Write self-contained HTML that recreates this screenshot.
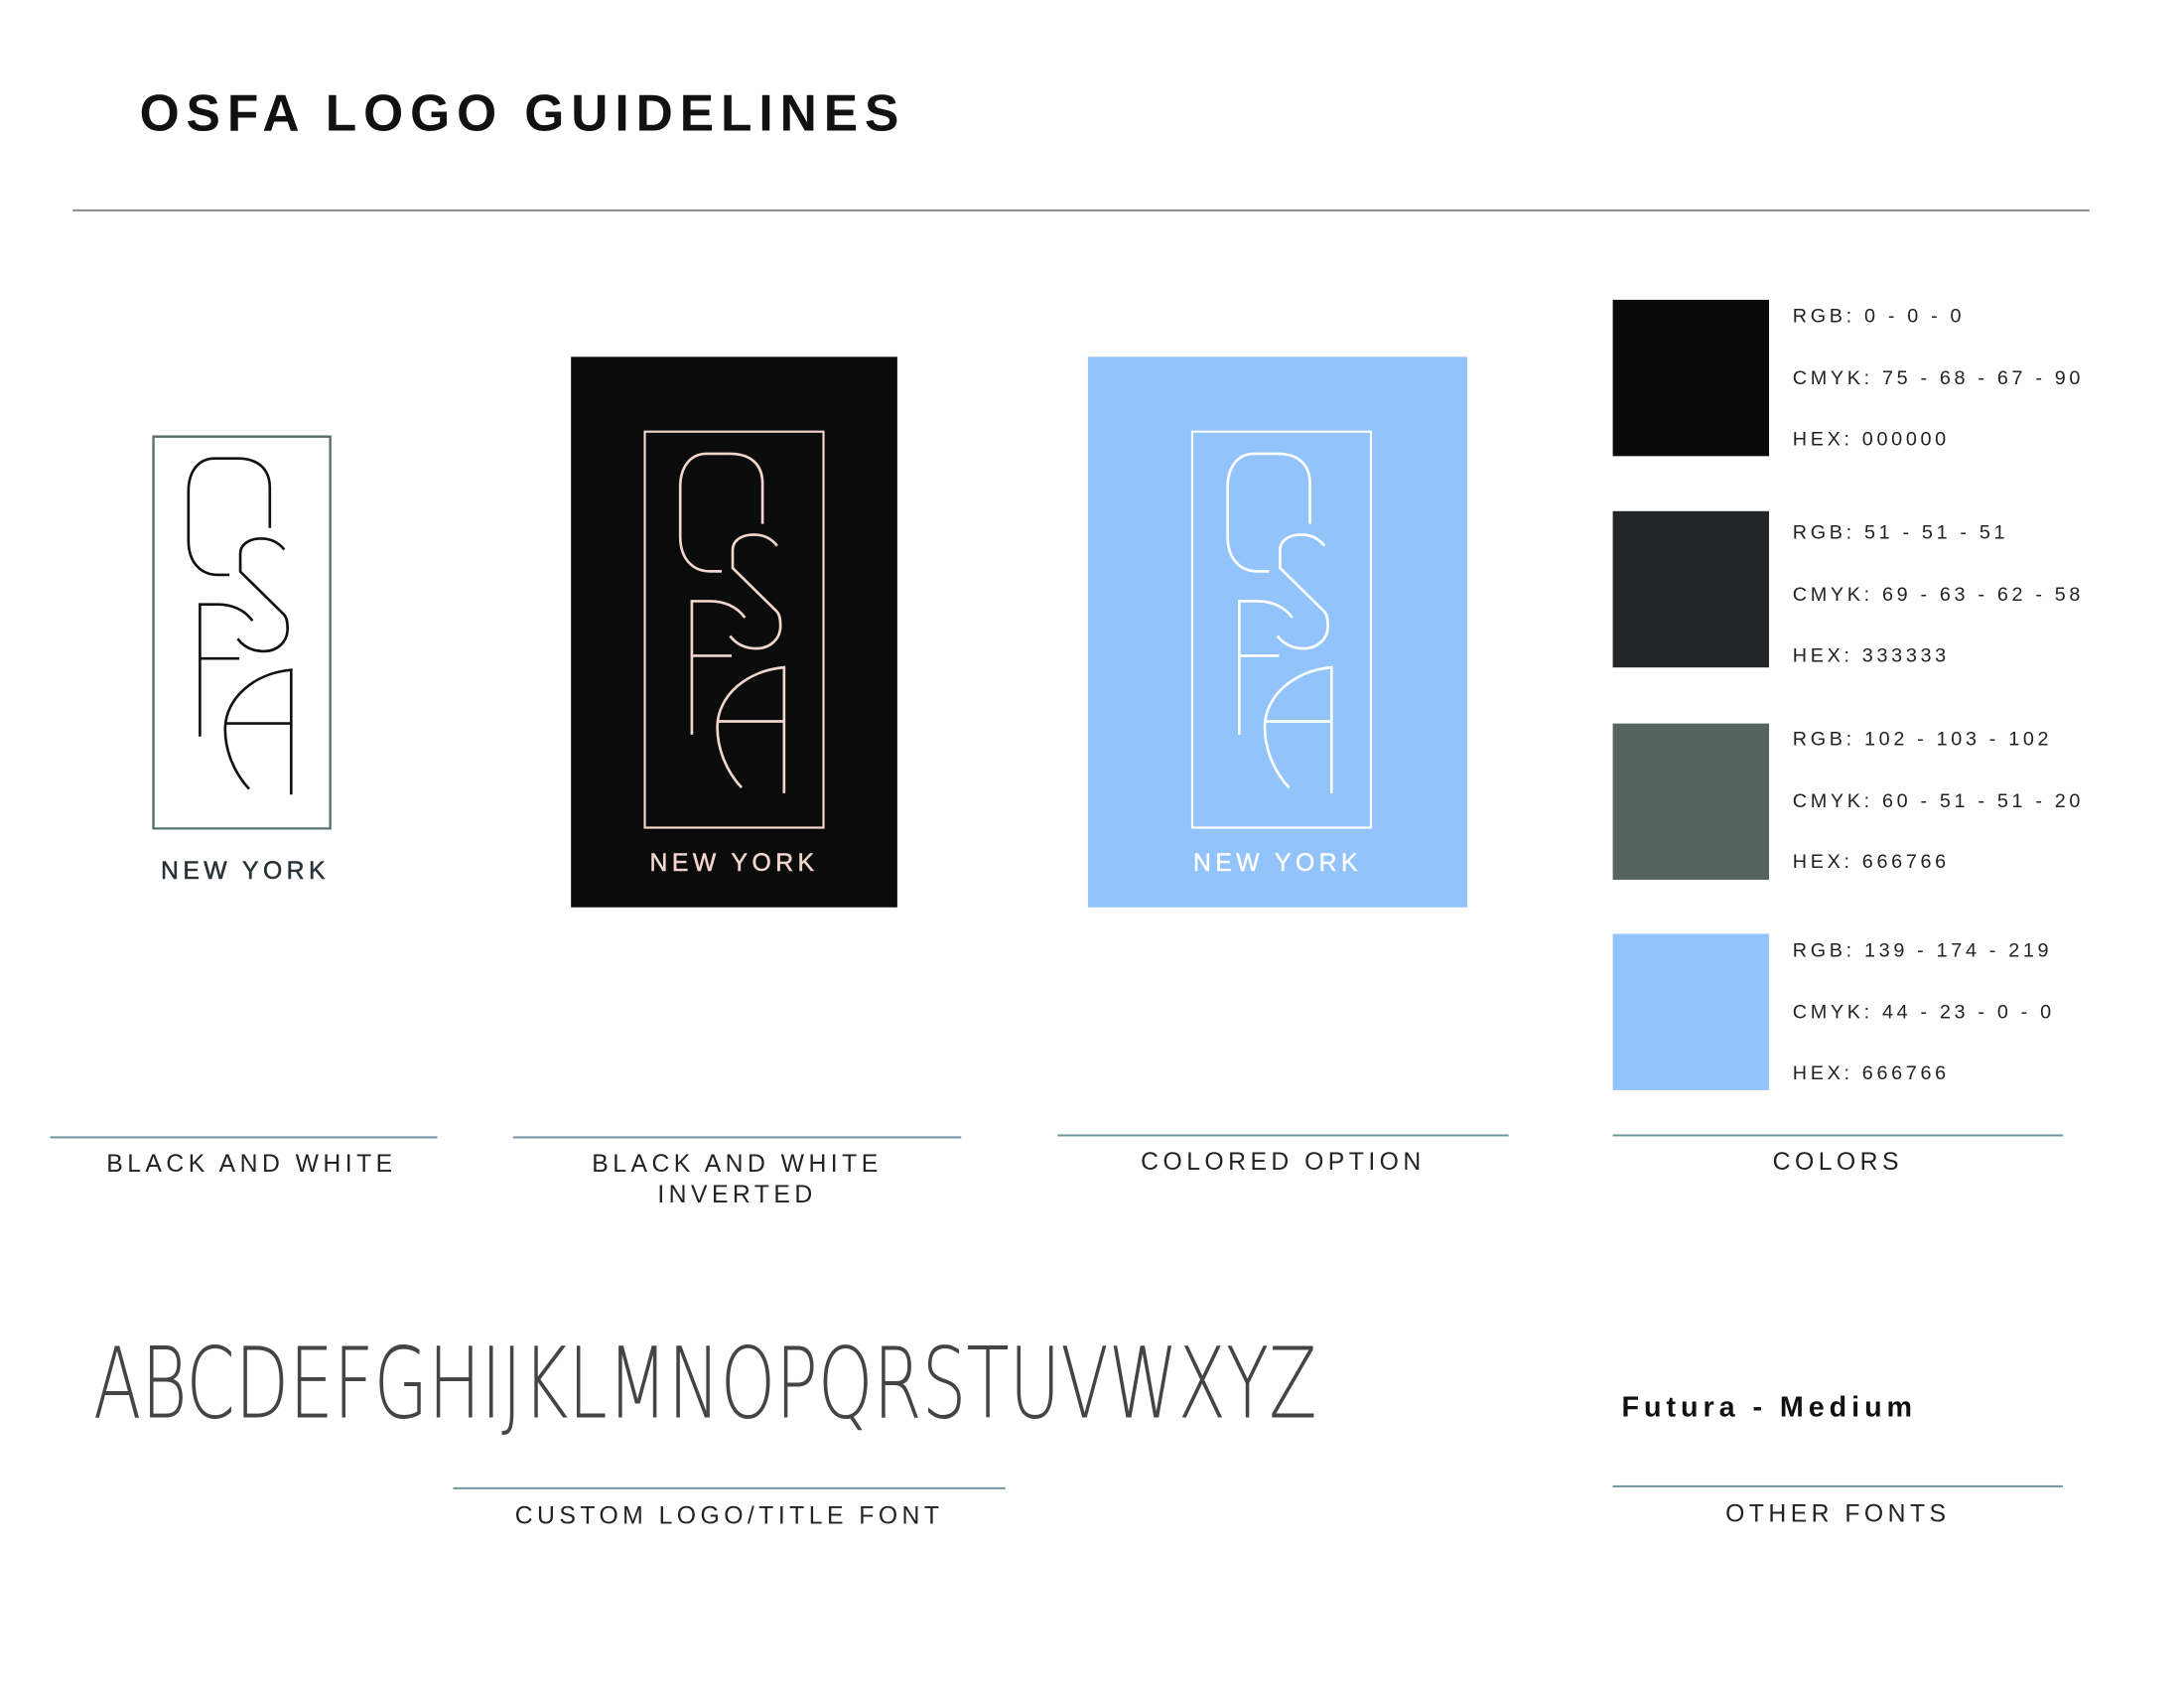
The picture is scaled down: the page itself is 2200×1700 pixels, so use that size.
<!DOCTYPE html>
<html><head><meta charset="utf-8"><style>
body{margin:0;width:2200px;height:1700px;background:#fff;position:relative;overflow:hidden;font-family:"Liberation Sans",sans-serif;color:#111}
#w{position:absolute;left:0;top:0;width:2200px;height:1700px;transform:scale(0.99);transform-origin:0 0}
.a{position:absolute}
.rule{position:absolute;height:2px;background:#6f959c}
.lbl{position:absolute;font-size:25px;letter-spacing:4.5px;text-align:center;color:#222;line-height:31px}
.sw{position:absolute;left:1641px;width:159px;height:159px}
.tx{position:absolute;left:1824px;font-size:20px;letter-spacing:3.7px;color:#222}
.ny{position:absolute;font-size:25px;letter-spacing:4.5px;text-align:center;-webkit-text-stroke:0.5px currentColor}
</style></head><body><div id="w">
<div class="a" style="left:142px;top:86px;font-size:52px;font-weight:bold;letter-spacing:7px;color:#111">OSFA LOGO GUIDELINES</div>
<div class="a" style="left:74px;top:213px;width:2052px;height:2px;background:#888"></div>

<svg width="0" height="0" style="position:absolute"><defs>
<g id="m" fill="none" stroke-width="8" stroke-linecap="butt">
<path d="M398,312 L398,190 C398,130 360,100 300,100 L230,100 C180,100 150,140 150,200 L150,350 C150,420 190,455 240,455 L275,455"/>
<path d="M442,378 C420,350 390,342 360,345 C330,348 308,365 308,390 L308,445 L440,575 C450,585 452,600 452,620 C452,660 420,688 380,688 C340,688 315,670 300,650"/>
<path d="M185,948 L185,545 L240,545 C280,545 320,560 345,595 M185,710 L305,710"/>
<path d="M463,1125 L463,745 C350,755 265,830 262,920 C260,990 290,1060 335,1108 M262,908 L463,908"/>
<rect x="42" y="32" width="541" height="1198" stroke-width="9"/>
</g></defs></svg>

<svg class="a" style="left:155px;top:443px" width="182" height="401" viewBox="40 30 545 1202" preserveAspectRatio="none"><use href="#m" stroke="#111"/><rect x="42" y="32" width="541" height="1198" fill="none" stroke="#56706f" stroke-width="9"/></svg>
<div class="ny" style="left:152px;top:872px;width:195px;color:#253236">NEW YORK</div>

<div class="a" style="left:581px;top:363px;width:332px;height:560px;background:#0b0b0b"></div>
<svg class="a" style="left:655px;top:438px" width="184" height="405" viewBox="40 30 545 1202" preserveAspectRatio="none"><use href="#m" stroke="#f2d5cd"/></svg>
<div class="ny" style="left:581px;top:864px;width:332px;color:#f2d5cd">NEW YORK</div>

<div class="a" style="left:1107px;top:363px;width:386px;height:560px;background:#93c3fb"></div>
<svg class="a" style="left:1212px;top:438px" width="184" height="405" viewBox="40 30 545 1202" preserveAspectRatio="none"><use href="#m" stroke="#fff"/></svg>
<div class="ny" style="left:1107px;top:864px;width:386px;color:#fff">NEW YORK</div>

<div class="sw" style="top:305px;background:#0a0a0a"></div>
<div class="sw" style="top:520px;background:#232628"></div>
<div class="sw" style="top:736px;background:#56645f"></div>
<div class="sw" style="top:950px;background:#93c3fb"></div>
<div class="tx" style="top:311px">RGB: 0 - 0 - 0</div>
<div class="tx" style="top:374px">CMYK: 75 - 68 - 67 - 90</div>
<div class="tx" style="top:436px">HEX: 000000</div>
<div class="tx" style="top:531px">RGB: 51 - 51 - 51</div>
<div class="tx" style="top:594px">CMYK: 69 - 63 - 62 - 58</div>
<div class="tx" style="top:656px">HEX: 333333</div>
<div class="tx" style="top:741px">RGB: 102 - 103 - 102</div>
<div class="tx" style="top:804px">CMYK: 60 - 51 - 51 - 20</div>
<div class="tx" style="top:866px">HEX: 666766</div>
<div class="tx" style="top:956px">RGB: 139 - 174 - 219</div>
<div class="tx" style="top:1019px">CMYK: 44 - 23 - 0 - 0</div>
<div class="tx" style="top:1081px">HEX: 666766</div>

<div class="rule" style="left:51px;top:1156px;width:394px"></div>
<div class="rule" style="left:522px;top:1156px;width:456px"></div>
<div class="rule" style="left:1076px;top:1154px;width:459px"></div>
<div class="rule" style="left:1641px;top:1154px;width:458px"></div>
<div class="lbl" style="left:51px;top:1169px;width:410px">BLACK AND WHITE</div>
<div class="lbl" style="left:522px;top:1169px;width:456px">BLACK AND WHITE<br>INVERTED</div>
<div class="lbl" style="left:1076px;top:1167px;width:459px">COLORED OPTION</div>
<div class="lbl" style="left:1641px;top:1167px;width:458px">COLORS</div>

<svg class="a" style="left:0;top:1300px" width="1400" height="180"><text x="95" y="142" font-family="'DejaVu Sans','Liberation Sans',sans-serif" font-weight="200" font-size="100" textLength="1245" lengthAdjust="spacingAndGlyphs" fill="#444">ABCDEFGHIJKLMNOPQRSTUVWXYZ</text></svg>

<div class="a" style="left:1650px;top:1416px;font-size:29px;font-weight:bold;letter-spacing:5px;color:#111">Futura - Medium</div>

<div class="rule" style="left:461px;top:1513px;width:562px"></div>
<div class="rule" style="left:1641px;top:1511px;width:458px"></div>
<div class="lbl" style="left:461px;top:1527px;width:562px">CUSTOM LOGO/TITLE FONT</div>
<div class="lbl" style="left:1641px;top:1525px;width:458px">OTHER FONTS</div>
</div></body></html>
